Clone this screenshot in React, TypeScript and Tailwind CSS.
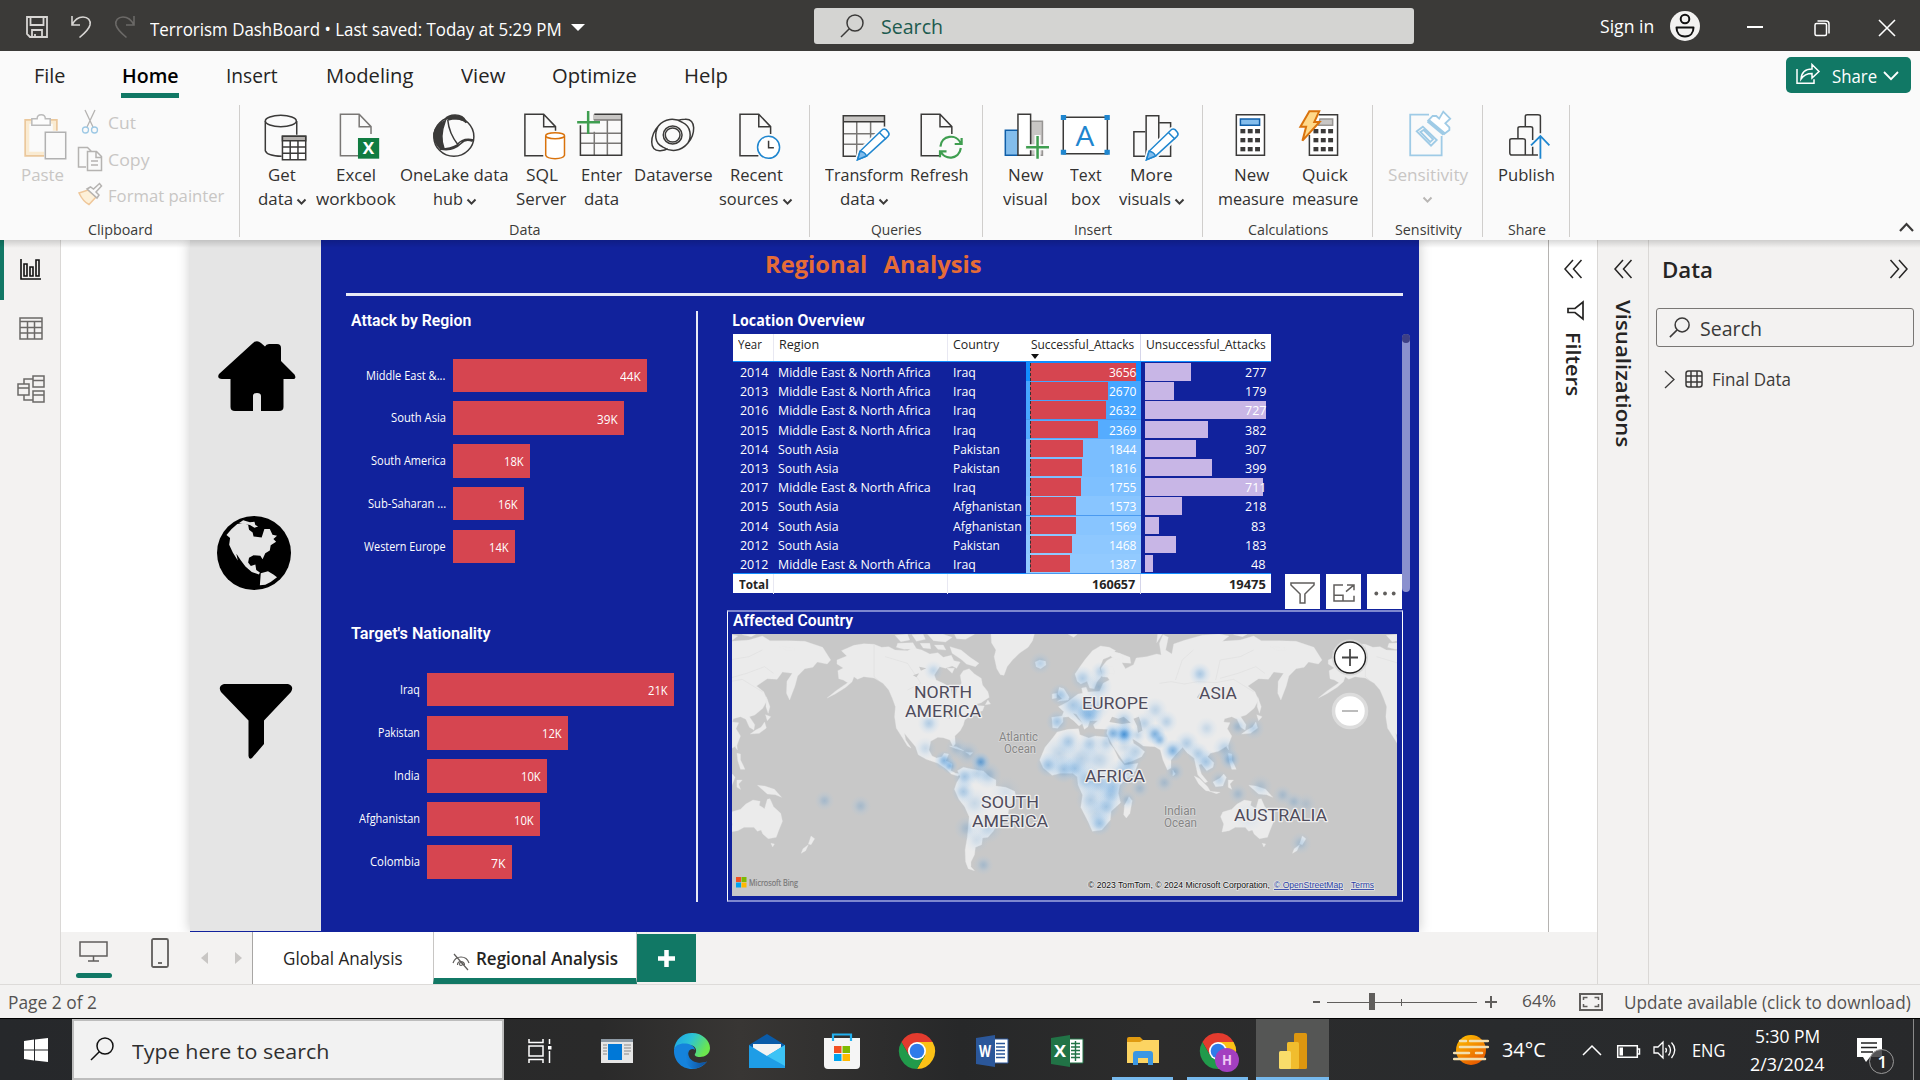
import React, { useLayoutEffect, useRef, useState } from "react";

/* Text set to a known width: the glyph run is scaled along its own axis. */
function T({ w, className = "", vertical = false, children }: { w: number; className?: string; vertical?: boolean; children: React.ReactNode }) {
  const ref = useRef<HTMLSpanElement>(null);
  const [s, setS] = useState(1);
  useLayoutEffect(() => {
    const el = ref.current;
    if (!el) return;
    const n = vertical ? el.offsetHeight : el.offsetWidth;
    if (n) setS((w + 0.7) / n);
  }, [w, vertical, children]);
  return (
    <span className={"block shrink-0 " + className} style={vertical ? { height: w } : { width: w }}>
      <span
        ref={ref}
        className={vertical ? "inline-block origin-top whitespace-pre [writing-mode:vertical-rl]" : "inline-block origin-left whitespace-pre"}
        style={{ transform: vertical ? `scaleY(${s})` : `scaleX(${s})` }}
      >
        {children}
      </span>
    </span>
  );
}

/* Line drawing; strokes keep their width whatever the viewBox ratio is. */
function Art({ box, w, h, className = "", sw = 1.5, stroke = "#3b3a39", children }: { box: string; w: number; h: number; className?: string; sw?: number; stroke?: string; children: React.ReactNode }) {
  return (
    <svg width={w} height={h} viewBox={box} preserveAspectRatio="none" fill="none" stroke={stroke} strokeWidth={sw} className={"block shrink-0 overflow-visible [&_*]:[vector-effect:non-scaling-stroke] " + className}>
      {children}
    </svg>
  );
}

function Magnifier({ w = 24, h = 24, stroke = "#3b3a39", className = "" }) {
  return (
    <Art box="0 0 24 24" w={w} h={h} stroke={stroke} sw={1.5} className={className}>
      <circle cx="15" cy="9" r="8" />
      <path d="M9.300 14.700L1 23" />
    </Art>
  );
}

function TitleBar() {
  return (
    <header className="flex h-[51px] shrink-0 bg-[#3b3a38] text-[18px] leading-6 text-white">
      <Art box="0 0 22 22" w={22} h={22} stroke="#d8d6d4" sw={1.8} className="mt-4 ml-[26px]">
        <path d="M1 1h20v20H4l-3-3zM4.500 1v8h13V1M6 21v-7h10v7M9 21v-3" />
      </Art>
      <Art box="0 0 20 22" w={20} h={22} stroke="#d8d6d4" sw={1.6} className="mt-4 ml-[23px]">
        <path d="M1 0v9h8M1 9C4 3 8 1 12 1c5 0 8 3.500 7 8-1 4-5 8-10.500 12.500" />
      </Art>
      <Art box="0 0 20 22" w={20} h={22} stroke="#6b6967" sw={1.6} className="mt-4 ml-6">
        <path d="M19 0v9h-8M19 9C16 3 12 1 8 1 3 1 0 4.500 1 9c1 4 5 8 10.500 12.500" />
      </Art>
      <T w={411} className="mt-[17px] ml-[15px]">Terrorism DashBoard • Last saved: Today at 5:29 PM</T>
      <svg width="14" height="7" className="mt-6 ml-[10px]"><path d="M0 0h14L7 7z" fill="#fff" /></svg>
      <div className="mt-2 ml-[229px] flex h-9 w-[600px] shrink-0 rounded-[3px] bg-[#d4d4d2] text-[20px] text-[#1d5b4f]">
        <Magnifier className="mt-[6px] ml-[26px]" />
        <T w={61} className="mt-[7px] ml-[17px]">Search</T>
      </div>
      <T w={54} className="mt-[14px] ml-[186px]">Sign in</T>
      <Art box="0 0 30 30" w={30} h={30} stroke="#111" sw={2} className="mt-[11px] ml-4">
        <circle cx="15" cy="15" r="15" fill="#f3f2f1" stroke="none" />
        <circle cx="15" cy="8" r="4.300" />
        <path d="M6.500 16.500h17c0 5-3 9-8.500 9s-8.500-4-8.500-9z" strokeLinejoin="round" />
      </Art>
      <div className="mt-[26px] ml-[47px] h-[1.5px] w-4 bg-white" />
      <Art box="0 0 16 16" w={16} h={16} stroke="#fff" className="mt-5 ml-[51px]">
        <rect x="1" y="3.500" width="11.500" height="12" rx="1.500" />
        <path d="M3.500 1h8.500q3 0 3 3v9.500" />
      </Art>
      <Art box="0 0 16 16" w={16} h={16} stroke="#fff" sw={1.6} className="mt-5 ml-[49px]">
        <path d="M0 0l16 16M16 0L0 16" />
      </Art>
    </header>
  );
}

function TabStrip() {
  return (
    <nav className="flex h-[54px] shrink-0 text-[20px] leading-6 text-[#252423]">
      <T w={31} className="mt-[13px] ml-[34px]">File</T>
      <div className="mt-[13px] ml-14 w-[58px]">
        <T w={56} className="ml-px font-semibold text-black">Home</T>
        <div className="mt-[5px] h-[5px] w-[58px] bg-[#117865]" />
      </div>
      <T w={51} className="mt-[13px] ml-[47px]">Insert</T>
      <T w={87} className="mt-[13px] ml-[49px]">Modeling</T>
      <T w={44} className="mt-[13px] ml-12">View</T>
      <T w={84} className="mt-[13px] ml-[47px]">Optimize</T>
      <T w={43} className="mt-[13px] ml-12">Help</T>
      <div className="mt-[6px] mr-[9px] ml-auto flex h-9 w-[125px] rounded-[5px] bg-[#117865] text-[18px] text-white">
        <Art box="0 0 24 21" w={24} h={21} stroke="#fff" className="mt-[6px] ml-[10px]">
          <path d="M1 6v14.300h17v-4M5 16c.5-7 4-10 11-10V1.500l7 7-7 6.500v-4.500c-5 0-8 1-11 5.500z" />
        </Art>
        <T w={44} className="mt-[7px] ml-3">Share</T>
        <Art box="0 0 14 9" w={14} h={8} stroke="#fff" sw={1.8} className="mt-[15px] ml-2"><path d="M0 0l7 8 7-8" /></Art>
      </div>
    </nav>
  );
}

function Chev({ color = "#3b3a39", className = "" }) {
  return <Art box="0 0 9 6" w={9} h={5.500} stroke={color} sw={2} className={className}><path d="M.5.500L4.500 5 8.500.500" /></Art>;
}

type Line = [string, number];

/* One large ribbon command: drawing over one or two label lines. */
function Cmd({ x, w, o = 0, a, b, chev = false, muted = false, children }: { x: number; w: number; o?: number; a: Line; b?: Line; chev?: boolean; muted?: boolean; children: React.ReactNode }) {
  return (
    <div className={"flex shrink-0 flex-col items-center text-[17px] leading-6 " + (muted ? "text-[#c8c6c4]" : "text-[#323130]")} style={{ width: w }}>
      <Art box={`${(x - o) * 2.45} 333 ${w * 2.45} 147`} w={w} h={49}>{children}</Art>
      <T w={a[1]} className="mt-[3px]">{a[0]}</T>
      {b && (
        <div className="flex items-center">
          <T w={b[1]}>{b[0]}</T>
          {chev && <Chev className="mt-[5px] ml-[5px]" />}
        </div>
      )}
      {!b && chev && <Chev color="#b8b6b4" className="mt-[10px]" />}
    </div>
  );
}

function Group({ className, label, lw, children }: { className: string; label: string; lw: number; children: React.ReactNode }) {
  return (
    <section className={"flex h-[132px] shrink-0 flex-col items-center border-r border-[#d0cecc] pt-[6px] " + className}>
      <div className="flex h-[108px] w-full shrink-0">{children}</div>
      <T w={lw} className="text-[15px] leading-5 text-[#3b3a39]">{label}</T>
    </section>
  );
}

const Doc = ({ x, short = false }: { x: number; short?: boolean }) => (
  <path d={`M${x + 45} 467H${x}V343H${x + 46}L${x + 75} 380V${short ? 392 : 402}M${x + 46} 343V380H${x + 75}`} />
);
const Pencil = ({ x }: { x: number }) => (
  <g stroke="#1f86cf">
    <path d={`M${x} 479l6-25 52-62q6-8 12-3l5 7q5 7-1 14l-52 58z`} fill="#fff" stroke="#fafafa" strokeWidth="5" />
    <path d={`M${x} 479l6-25 52-62q6-8 12-3l5 7q5 7-1 14l-52 58z`} fill="#fff" />
    <path d={`M${x} 479l6-25q12 2 16 14z`} fill="#83bdec" />
    <path d={`M${x + 54} 398l16 20`} />
  </g>
);
const Keys = ({ x }: { x: number }) => (
  <g fill="#3b3a39" stroke="none">
    {[387, 414, 441].map((y) => [0, 18, 36].map((d) => <rect key={`${y}-${d}`} x={x + d} y={y} width="12" height="13" />))}
  </g>
);

function Small({ icon, label, w, className = "" }: { icon: React.ReactNode; label: string; w: number; className?: string }) {
  return (
    <div className={"flex h-9 items-start text-[17px] leading-6 text-[#c8c6c4] " + className}>
      <div className="w-[30px]">{icon}</div>
      <T w={w} className="mt-px">{label}</T>
    </div>
  );
}

function Ribbon() {
  return (
    <div className="flex h-[135px] shrink-0">
      <Group className="w-[240px]" label="Clipboard" lw={64}>
        <div className="ml-[10px] w-[64px]">
          <Cmd x={10} w={64} a={["Paste", 42]} muted>
            <g opacity=".55">
              <path d="M108 467H62V360H139V392" stroke="#e0a050" strokeWidth="2" />
              <path d="M108 460H68V367H133V392" stroke="#fbe0b0" strokeWidth="3" />
              <path d="M78 376v-20h13q0-12 10-12t10 12h12v20z" fill="#fff" stroke="#888" />
              <rect x="111" y="397" width="50" height="79" fill="#fafafa" stroke="#777" />
            </g>
          </Cmd>
        </div>
        <div className="ml-1">
          <Small className="-mt-px" label="Cut" w={27} icon={<Art box="0 0 16 24" w={16} h={24} stroke="#b5b3b1" sw={1.3} className="ml-1"><path d="M3 0l8 17M13 0L5 17" /><circle cx="3.500" cy="20" r="3" stroke="#9dc8e4" /><circle cx="12.500" cy="20" r="3" stroke="#9dc8e4" /></Art>} />
          <Small label="Copy" w={41} className="mt-px" icon={<Art box="0 0 24 24" w={24} h={24} stroke="#b5b3b1"><path d="M8 20H.5V.5h9l4 4M9.500 4.500h9l5 5v14h-14zM18 4.500v6h5.500M13 14h7M13 18h7" /></Art>} />
          <Small label="Format painter" w={116} icon={<Art box="0 0 24 22" w={24} h={22} stroke="#b5b3b1"><path d="M1 10l9-3 8 7-7 7.500q-6-3-10-11.500z" fill="#fdf0d8" stroke="#efc79a" /><path d="M9 6l10 9 2-3-3-3 5.500-6-2-2.500-6 5.500-3-2z" fill="#fafafa" /></Art>} />
        </div>
      </Group>

      <Group className="w-[570px]" label="Data" lw={31}>
        <div className="w-2" />
        <Cmd x={248} w={67} a={["Get", 27]} b={["data", 34]} chev>
          <ellipse cx="688" cy="363" rx="38" ry="17" />
          <path d="M650 363V452Q654 467 690 469M727 363V404" />
          <rect x="692" y="409" width="57" height="70" fill="#fff" />
          <path d="M692 409h57v13h-57z" fill="#b3b0ad" />
          <path d="M692 441h57M692 460h57M711 422v57M730 422v57" />
        </Cmd>
        <Cmd x={315} w={80} a={["Excel", 39]} b={["workbook", 79]}>
          <g stroke="#797775"><Doc x={834} /></g>
          <rect x="877" y="414" width="52" height="62" fill="#107c41" stroke="none" />
          <text x="889" y="463" fontSize="46" fontWeight="700" textLength="28" lengthAdjust="spacingAndGlyphs" fill="#fff" stroke="none">X</text>
        </Cmd>
        <Cmd x={395} w={118} a={["OneLake data", 108]} b={["hub", 29]} chev>
          <ellipse cx="1112" cy="410" rx="49" ry="59" fill="#fafafa" />
          <path d="M1091 362Q1076 410 1088 446L1080 448Q1062 425 1063 402Q1068 372 1091 362Z" fill="#3b3a39" />
          <path d="M1090 358Q1098 345 1115 345Q1135 345 1141 364Q1115 350 1090 358Z" fill="#3b3a39" />
          <path d="M1097 360Q1100 400 1122 434Q1105 447 1078 447M1097 360Q1130 350 1142 368M1120 434Q1135 412 1160 420M1078 447Q1110 455 1130 430Q1140 415 1158 424" />
        </Cmd>
        <Cmd x={513} w={56} a={["SQL", 31]} b={["Server", 50]}>
          <Doc x={1286} short />
          <g stroke="#d9730d"><path d="M1337 407V466Q1340 476 1360 476T1383 466V407" fill="#fff" /><ellipse cx="1360" cy="407" rx="23" ry="9" fill="#fff" /></g>
        </Cmd>
        <Cmd x={569} w={64} a={["Enter", 40]} b={["data", 34]}>
          <path d="M1453 343H1523V360H1453Z" fill="#c8c6c4" stroke="none" />
          <path d="M1422 400H1523M1422 430H1523M1456 395V466M1488 360V466M1455 360H1523" stroke="#797775" />
          <path d="M1422 376V466H1523V343H1456" />
          <path d="M1441 333V402M1414 367H1470" stroke="#3f9e50" strokeWidth="2.500" />
        </Cmd>
        <Cmd x={633} w={79} o={640} a={["Dataverse", 78]}>
          <ellipse cx="80" cy="405" rx="18" ry="21" />
          <ellipse cx="80" cy="405" rx="23" ry="27" />
          <path d="M50 452C20 455 25 405 45 378C60 355 85 352 105 368M110 358C140 355 135 405 117 430C100 455 75 457 56 441M45 378C35 400 35 430 56 441M50 452Q62 451 68 446M117 430C127 410 125 380 105 368M110 358Q98 358 93 363" />
        </Cmd>
        <Cmd x={712} w={87} o={640} a={["Recent", 52]} b={["sources", 59]} chev>
          <Doc x={245} />
          <ellipse cx="315" cy="442" rx="27" ry="33" stroke="#1f86cf" fill="#fff" />
          <path d="M315 422V443H328" />
        </Cmd>
      </Group>

      <Group className="w-[173px]" label="Queries" lw={50}>
        <div className="w-[11px]" />
        <Cmd x={821} w={86} o={640} a={["Transform", 78]} b={["data", 34]} chev>
          <path d="M498 347H599V364H498Z" fill="#c8c6c4" stroke="none" />
          <path d="M498 401H599M498 433H560M531 365V469M565 365V430" stroke="#797775" />
          <path d="M599 385V347H498V469H530M498 365H599" />
          <Pencil x={533} />
        </Cmd>
        <Cmd x={907} w={63} o={640} a={["Refresh", 58]}>
          <Doc x={689} />
          <g stroke="#3f9e50" strokeWidth="2.200"><path d="M736 440C738 405 775 400 786 430M788 414V432H771M786 444C782 480 745 482 736 452M735 472V454H751" /></g>
        </Cmd>
      </Group>

      <Group className="w-[220px]" label="Insert" lw={37}>
        <div className="w-[13px]" />
        <Cmd x={996} w={58} o={640} a={["New", 35]} b={["visual", 44]}>
          <rect x="957" y="364" width="29" height="102" fill="#c8c6c4" stroke="#979593" />
          <rect x="895" y="391" width="32" height="75" fill="#83bdec" stroke="#0f5ea8" />
          <rect x="926" y="343" width="31" height="123" fill="#fff" />
          <path d="M974 405V478M943 442H1004" stroke="#fafafa" strokeWidth="6" />
          <path d="M974 408V476M946 442H1002" stroke="#3f9e50" strokeWidth="2.500" />
        </Cmd>
        <Cmd x={1054} w={62} o={640} a={["Text", 31]} b={["box", 29]}>
          <rect x="1037" y="352" width="108" height="109" fill="#fff" />
          <g fill="#1f86cf" stroke="none"><path d="M1031 345h13v15h-13zM1138 345h13v15h-13zM1031 449h13v15h-13zM1138 449h13v15h-13z" /></g>
          <text x="1067" y="437" fontSize="84" textLength="46" lengthAdjust="spacingAndGlyphs" fill="#1f86cf" stroke="none">A</text>
        </Cmd>
        <Cmd x={1116} w={70} o={640} a={["More", 42]} b={["visuals", 51]} chev>
          <path d="M1238 469H1210V395H1238M1272 368H1300V469H1270" />
          <path d="M1240 469V347H1271V430" />
          <Pencil x={1241} />
        </Cmd>
      </Group>

      <Group className="w-[170px]" label="Calculations" lw={80}>
        <div className="w-3" />
        <Cmd x={1215} w={72} o={640} a={["New", 35]} b={["measure", 66]}>
          <rect x="1461" y="344" width="69" height="122" fill="#fff" />
          <rect x="1471" y="357" width="47" height="19" fill="#83bdec" stroke="#0f5ea8" />
          <Keys x={1471} />
        </Cmd>
        <Cmd x={1287} w={75} o={1280} a={["Quick", 45]} b={["measure", 66]}>
          <path d="M95 344H141V466H72V405" fill="#fff" />
          <path d="M98 357H129V376H94Z" fill="#c8c6c4" stroke="#979593" />
          <Keys x={82} />
          <path d="M72 334H96L84 366H97L55 422L64 380H50Z" fill="#ffd98a" stroke="#d9730d" strokeWidth="2" />
        </Cmd>
      </Group>

      <Group className="w-[110px]" label="Sensitivity" lw={66}>
        <Cmd x={1373} w={109} o={1280} a={["Sensitivity", 79]} chev muted>
          <g stroke="#9fcbe6" strokeWidth="1.800">
            <path d="M365 344H319V466H396V408" />
            <path d="M335 394L350 380L384 420L370 437ZM344 396L352 390L375 418L368 426Z" />
            <path d="M363 362L374 348H383L390 356L400 335L417 356L405 370L415 382V390L402 402Z" fill="#fff" />
            <path d="M363 362L402 402" strokeWidth="4" />
          </g>
        </Cmd>
      </Group>

      <Group className="w-[87px]" label="Share" lw={37}>
        <Cmd x={1483} w={86} o={1280} a={["Publish", 56]}>
          <path d="M601 380V349Q601 344 606 344H632Q638 344 638 349V400M583 414V385Q583 380 588 380H614Q619 380 619 385V420M563 421Q563 416 568 416H595Q601 416 601 421V465H568Q563 465 563 458ZM601 465H632M619 440V465" />
          <path d="M638 476V408M615 436L638 408L660 436" stroke="#1f86cf" strokeWidth="1.800" />
        </Cmd>
      </Group>
      <Art box="0 0 13 8" w={13} h={8} sw={2.2} className="mt-[118px] ml-[330px]"><path d="M0 8l6.500-7L13 8" /></Art>
    </div>
  );
}

function Rail() {
  return (
    <aside className="flex w-[61px] shrink-0 flex-col border-r border-[#dad8d6] bg-[#f3f2f1]">
      <div className="flex h-[60px] border-l-4 border-[#117865] pt-[19px] pl-4">
        <Art box="0 0 21 21" w={21} h={21} stroke="#111" sw={1.6}><path d="M1 0v20h20M4 17V5h3v12zM10 17V8h3v9zM16 17V1h3v16z" /></Art>
      </div>
      <Art box="0 0 24 23" w={24} h={23} stroke="#6b6967" className="mt-[17px] ml-[19px]"><path d="M1 1h22v21H1zM1 4.500h22M1 10.500h22M1 16h22M8.500 4v18M15.500 4v18" /></Art>
      <Art box="0 0 28 28" w={28} h={28} stroke="#6b6967" className="mt-[35px] ml-[17px]"><path d="M1 9h11v11H1zM1 13h11M16 1h11v11H16zM16 5.500h11M16 16h11v11H16zM16 20h11M7 9V4h9M7 20v5h9" /></Art>
    </aside>
  );
}

type Bar = { label: string; lw: number; value: string; vw: number; len: number };
const regions: Bar[] = [
  { label: "Middle East &...", lw: 79, value: "44K", vw: 20, len: 194 },
  { label: "South Asia", lw: 54, value: "39K", vw: 20, len: 171 },
  { label: "South America", lw: 74, value: "18K", vw: 19, len: 77 },
  { label: "Sub-Saharan ...", lw: 77, value: "16K", vw: 19, len: 71 },
  { label: "Western Europe", lw: 81, value: "14K", vw: 19, len: 62 },
];
const nations: Bar[] = [
  { label: "Iraq", lw: 19, value: "21K", vw: 19, len: 246.5 },
  { label: "Pakistan", lw: 41, value: "12K", vw: 19, len: 140.5 },
  { label: "India", lw: 25, value: "10K", vw: 19, len: 120 },
  { label: "Afghanistan", lw: 60, value: "10K", vw: 19, len: 113 },
  { label: "Colombia", lw: 49, value: "7K", vw: 14, len: 85 },
];

function BarChart({ bars, labelClass, rowClass }: { bars: Bar[]; labelClass: string; rowClass: string }) {
  return (
    <div className="text-[12.500px] leading-5 text-white">
      {bars.map((b) => (
        <div key={b.label} className={"flex items-start " + rowClass}>
          <div className={"flex shrink-0 justify-end pt-[7px] " + labelClass}><T w={b.lw}>{b.label}</T></div>
          <div className="flex h-[33.500px] items-center justify-end bg-[#d64550] pt-[3px] pr-[7px]" style={{ width: b.len }}>
            <T w={b.vw}>{b.value}</T>
          </div>
        </div>
      ))}
    </div>
  );
}

const widths: Record<string, number> = { "Middle East & North Africa": 152, "South Asia": 60, Iraq: 22, Pakistan: 46, Afghanistan: 68 };
const ME = "Middle East & North Africa";
const SA = "South Asia";
const rows: [number, string, string, number, number, string, number, number][] = [
  [2014, ME, "Iraq", 3656, 105.6, "bg-[#118dff]", 277, 45.5],
  [2013, ME, "Iraq", 2670, 77.6, "bg-[#45a5ff]", 179, 29.4],
  [2016, ME, "Iraq", 2632, 75.8, "bg-[#47a6ff]", 727, 120.5],
  [2015, ME, "Iraq", 2369, 68.4, "bg-[#55acff]", 382, 63.4],
  [2014, SA, "Pakistan", 1844, 52.8, "bg-[#7abeff]", 307, 51],
  [2013, SA, "Pakistan", 1816, 51.9, "bg-[#7abeff]", 399, 66.6],
  [2017, ME, "Iraq", 1755, 50.5, "bg-[#7ec0ff]", 711, 117.5],
  [2015, SA, "Afghanistan", 1573, 45.5, "bg-[#88c5ff]", 218, 36.7],
  [2014, SA, "Afghanistan", 1569, 45.5, "bg-[#88c5ff]", 83, 13.8],
  [2012, SA, "Pakistan", 1468, 42.2, "bg-[#8ec8ff]", 183, 30.8],
  [2012, ME, "Iraq", 1387, 40.4, "bg-[#92caff]", 48, 8.3],
];
const cols = "grid grid-cols-[41px_174px_78px_115px_130px]";

function DataTable() {
  return (
    <div className="w-[538px] shrink-0 text-[13px] text-white">
      <div className={cols + " h-7 border-b border-[#118dff] bg-white leading-5 text-[#252423]"}>
        <div className="border-r border-[#e8e8f2] pl-[5px]"><T w={23}>Year</T></div>
        <div className="border-r border-[#e8e8f2] pl-[5px]"><T w={39}>Region</T></div>
        <div className="pl-[5px]"><T w={45}>Country</T></div>
        <div className="border-r border-[#d5d5ea] pl-[5px]">
          <T w={103}>Successful_Attacks</T>
          <svg width="8" height="5" className="block"><path d="M0 0h8L4 5z" fill="#111" /></svg>
        </div>
        <div className="pl-[5px]"><T w={119}>Unsuccessful_Attacks</T></div>
      </div>
      {rows.map(([y, region, country, s, sl, bg, u, ul], i) => (
        <div key={i} className={cols + " h-[19.200px] leading-[20px] font-medium"}>
          <div className="flex justify-end pr-[6px]"><T w={28}>{y}</T></div>
          <div className="pl-1"><T w={widths[region]}>{region}</T></div>
          <div className="pl-[5px]"><T w={widths[country]}>{country}</T></div>
          <div className={"flex border-b border-[#4a9af0] pt-px " + bg}>
            <div className="ml-1 grid h-[18px] w-[106px]">
              <div className="col-start-1 row-start-1 h-[17.500px] border-l border-dashed border-[#333] bg-[#d64550]" style={{ width: sl }} />
              <div className="col-start-1 row-start-1 -mt-px flex justify-end"><T w={27}>{s}</T></div>
            </div>
          </div>
          <div className="grid pl-[4px]">
            <div className="col-start-1 row-start-1 mt-px h-[17.500px] bg-[#c8b6e6]" style={{ width: ul }} />
            <div className="col-start-1 row-start-1 flex justify-end pr-[6px]"><T w={u > 99 ? 20.5 : 14}>{u}</T></div>
          </div>
        </div>
      ))}
      <div className={cols + " h-[19.500px] border-t border-[#118dff] bg-white leading-[20px] font-bold text-[#252423]"}>
        <div className="border-r border-[#e8e8f2] pl-[6px]"><T w={29}>Total</T></div>
        <div className="border-r border-[#e8e8f2]" />
        <div />
        <div className="flex justify-end border-r border-[#d5d5ea] pr-[5px]"><T w={43}>160657</T></div>
        <div className="flex justify-end pr-[6px]"><T w={36}>19475</T></div>
      </div>
    </div>
  );
}

const heat: [number, number, number, number][] = [
  [905, 403, 18, 1], [905, 403, 14, 0.5], [880, 400, 16, 0.75], [974, 402, 17, 0.75], [985, 420, 14, 0.6], [1014, 452, 18, 0.75], [1045, 430, 20, 0.4], [828, 345, 22, 0.6], [815, 335, 24, 0.4],
  [790, 315, 24, 0.45], [840, 320, 24, 0.35], [755, 365, 18, 0.5], [762, 285, 18, 0.5], [812, 235, 20, 0.4], [852, 215, 16, 0.35], [848, 260, 22, 0.4], [905, 360, 18, 0.4],
  [584, 486, 16, 0.9], [502, 482, 16, 0.7], [515, 498, 13, 0.65], [530, 445, 18, 0.3], [555, 460, 20, 0.35], [548, 530, 19, 0.5], [545, 575, 19, 0.45], [600, 525, 22, 0.4], [575, 520, 18, 0.3],
  [468, 370, 18, 0.4], [460, 445, 18, 0.25], [478, 212, 16, 0.3], [570, 610, 24, 0.25], [552, 685, 20, 0.3], [600, 685, 24, 0.3], [575, 720, 20, 0.2], [590, 795, 16, 0.3], [315, 618, 17, 0.3], [234, 602, 16, 0.3],
  [735, 495, 20, 0.55], [770, 508, 22, 0.55], [795, 505, 20, 0.5], [780, 425, 20, 0.45], [828, 432, 20, 0.4], [865, 430, 18, 0.35], [760, 460, 28, 0.3], [810, 475, 28, 0.35], [850, 480, 26, 0.3], [915, 490, 20, 0.5],
  [820, 540, 26, 0.5], [850, 550, 26, 0.45], [880, 560, 24, 0.45], [830, 600, 24, 0.4], [865, 620, 22, 0.5], [850, 670, 20, 0.55], [875, 585, 22, 0.4], [840, 640, 24, 0.25], [912, 600, 15, 0.35], [940, 565, 16, 0.3], [995, 548, 16, 0.3], [1018, 515, 16, 0.4],
  [900, 520, 24, 0.4], [930, 455, 20, 0.35], [905, 440, 18, 0.2], [950, 370, 18, 0.35], [975, 330, 20, 0.3], [1000, 365, 18, 0.35], [935, 405, 14, 0.3], [1075, 222, 18, 0.45], [1090, 385, 18, 0.25], [1088, 485, 20, 0.5], [1070, 460, 18, 0.4], [1142, 478, 17, 0.6], [1130, 445, 20, 0.35],
  [1160, 380, 16, 0.35], [1195, 385, 18, 0.35], [1118, 540, 16, 0.3], [1210, 560, 20, 0.25], [1160, 582, 16, 0.3], [1260, 585, 16, 0.3], [1285, 605, 16, 0.3], [1312, 612, 18, 0.2], [1185, 650, 24, 0.15], [1300, 730, 18, 0.3], [717, 190, 18, 0.35], [640, 575, 26, 0.15],
];

function World() {
  return (
    <g id="world" stroke="#e9e9e9" strokeWidth="0.8" strokeLinejoin="round" fill="#ebebeb">
      <path d="M262 180L284 168 272 152 300 136 322 131 345 133 362 142 378 140 392 150 420 152 432 143 452 150 470 162 488 158 500 172 518 166 524 182 538 186 530 205 520 198 505 205 492 200 480 225 484 240 500 250 516 262 520 286 528 288 531 268 541 250 538 226 545 212 558 206 570 222 585 235 588 255 600 275 603 292 585 308 565 316 592 318 588 332 570 340 560 348 548 360 545 375 538 392 526 408 527 432 522 440 515 420 500 413 488 412 472 424 468 450 475 468 485 474 497 470 502 460 512 462 506 482 520 492 517 512 528 520 540 522 532 528 518 522 506 506 488 490 462 478 444 464 438 440 424 418 413 400 416 420 428 444 420 438 408 412 395 385 391 350 393 320 386 295 378 270 365 250 345 234 322 230 308 238 300 230 296 245 282 262 258 282 240 294 260 272 286 248 276 240 266 236 264 212 276 204 262 192Z" />
      <path d="M392 106L420 103 425 120 405 125ZM430 104L455 103 460 118 440 124ZM398 130L432 128 440 146 412 148 395 142ZM465 103L500 103 520 112 505 126 478 122ZM515 140L540 150 560 172 580 190 572 200 552 192 540 178 520 160ZM448 130L470 130 472 146 455 144ZM480 135L500 135 506 150 488 148ZM525 103L570 103 550 118 530 116ZM508 205L525 205 520 220ZM600 300L606 312 594 314Z" />
      <path d="M607 102L704 102 700 122 690 142 672 158 655 180 643 200 636 226 628 224 620 206 614 170 618 150 608 128Z" />
      <path d="M706 186L716 180 729 184 730 195 718 206 708 200Z" />
      <path d="M532 512L545 502 560 506 590 513 604 530 618 540 618 558 640 562 660 574 663 592 648 618 644 650 622 668 612 694 600 712 588 714 586 734 572 742 570 764 562 786 562 800 570 812 556 806 550 785 549 750 554 710 558 650 548 620 535 598 525 568 530 548 538 530Z" />
      <path d="M514 438L530 440 546 452 528 446ZM550 456L566 458 560 466Z" />
      <path d="M755 396L780 388 803 386 806 404 826 414 840 408 868 412 872 430 882 446 892 474 906 496 936 490 930 512 910 538 895 556 892 580 897 608 876 634 874 660 855 690 834 694 824 664 808 622 812 585 802 555 800 530 790 520 762 520 744 526 724 504 716 480 728 442 745 414Z" />
      <path d="M916 590L923 602 918 640 910 654 904 644 906 616Z" />
      <path d="M745 383L743 352 766 348 770 335 758 320 778 306 792 292 802 282 812 280 810 264 820 262 824 276 850 274 858 250 872 240 868 232 856 230 853 205 866 182 884 168 895 160 918 172 920 190 900 188 908 206 926 194 932 174 955 170 978 162 988 165 984 130 992 104 1004 112 998 150 1012 162 1016 132 1042 120 1080 106 1118 102 1140 108 1125 124 1165 120 1195 108 1212 122 1250 122 1290 124 1330 142 1348 180 1340 192 1318 186 1308 202 1290 206 1274 228 1268 258 1256 300 1249 280 1250 244 1262 220 1240 216 1228 238 1206 236 1182 258 1198 275 1206 300 1196 325 1178 345 1166 350 1178 374 1176 390 1166 382 1158 358 1146 350 1130 356 1128 366 1142 368 1136 386 1146 408 1138 436 1116 454 1098 460 1092 470 1106 488 1104 502 1090 512 1078 492 1072 494 1078 522 1092 545 1086 548 1070 525 1062 475 1046 458 1036 442 1020 464 1010 480 1010 504 1002 510 992 480 986 450 974 440 948 438 938 428 924 416 926 430 938 440 951 455 944 470 922 484 906 490 896 470 880 438 870 412 866 400 868 388 840 386 836 374 846 362 828 362 824 380 816 388 810 366 798 342 790 340 802 358 812 370 804 378 792 362 780 350 768 352 768 366 756 385Z" />
      <path d="M800 244L795 222 806 200 818 178 834 152 852 138 872 142 886 152 872 170 858 178 850 204 856 226 844 246 838 266 828 264 822 244 808 252Z" />
      <path d="M870 150L895 160 905 176 885 178 872 166ZM862 196L880 200 884 222 862 218 856 208Z" />
      <path d="M756 304L766 296 756 282 760 262 770 266 782 292 780 300ZM744 296L744 282 754 280 754 294Z" />
      <path d="M1062 528L1074 536 1092 560 1098 574 1088 572 1072 552ZM1096 574L1120 577 1112 581ZM1104 546L1120 534 1128 522 1134 532 1126 558 1110 560ZM1138 540L1150 540 1142 552 1146 568 1138 562ZM1184 556L1200 558 1222 568 1238 592 1224 584 1206 582 1196 570ZM1138 460L1146 462 1146 480 1152 496 1156 508 1146 508 1140 482ZM1134 440L1138 434 1139 450Z" />
      <path d="M1202 344L1214 350 1206 362ZM1200 366L1204 384 1188 400 1168 402 1180 390 1192 382ZM1204 290L1212 320 1208 340 1203 320ZM1014 510L1020 522 1014 528Z" />
      <path d="M1124 696L1128 672 1121 650 1126 636 1146 628 1158 612 1174 600 1190 604 1188 616 1200 626 1206 598 1212 596 1220 620 1236 640 1240 664 1232 690 1226 712 1208 716 1196 702 1192 690 1184 694 1176 682 1154 682 1140 692ZM1214 730L1222 732 1218 741Z" />
      <path d="M1304 708L1312 716 1304 734 1298 732ZM1298 734L1292 752 1282 760 1286 746Z" />
      <path d="M1232 140L1262 142 1270 150 1250 152ZM1150 104L1180 103 1170 110ZM980 103L990 103 978 128ZM780 103L800 103 792 112Z" />
      <g stroke="none" fill="#c8c8c8">
        <path d="M872 366L878 350 892 356 904 350 920 368 900 372ZM926 356L938 350 942 366 946 392 936 398 934 378ZM500 326L520 330 526 340 512 336ZM512 340L518 340 514 358ZM526 342L540 346 532 352ZM1068 292L1074 280 1077 284 1072 296ZM446 200L462 205 450 212ZM432 226L446 220 440 232Z" />
      </g>
      <g fill="none" stroke="#cfcfcf" strokeWidth="0.7">
        <path d="M345 134L345 230 372 262M984 250L1010 245 1040 252 1070 245 1110 248 1150 238 1196 276M1020 240L1035 180 1060 150M1110 240L1120 180 1165 170 1195 150M1220 220L1200 200 1160 220 1120 235M370 170L420 190 450 250 420 270" />
      </g>
    </g>
  );
}

const places: [string, number, number, number][] = [
  ["NORTH", 914, 697.5, 58], ["AMERICA", 905, 717, 76], ["EUROPE", 1082, 708.5, 66], ["ASIA", 1199, 699, 38], ["AFRICA", 1085, 781.5, 60],
  ["SOUTH", 981, 807.5, 58], ["AMERICA", 972, 827, 76], ["AUSTRALIA", 1234, 820.5, 93],
];
const seas: [string, number, number, number][] = [["Atlantic", 999, 740.5, 39], ["Ocean", 1004, 753, 32], ["Indian", 1164, 815, 32], ["Ocean", 1164, 827, 33]];

function MapVisual() {
  return (
    <div className="relative h-[262px] w-[665px] overflow-hidden bg-[#c8c8c8]">
      <svg width="665" height="262" viewBox="27 102 1489 786" preserveAspectRatio="none" className="block">
        <defs>
          <radialGradient id="heat">
            <stop offset="0" stopColor="#2b82d0" stopOpacity=".75" />
            <stop offset=".3" stopColor="#4595dd" stopOpacity=".6" />
            <stop offset=".6" stopColor="#72b3ee" stopOpacity=".32" />
            <stop offset="1" stopColor="#8cc4f5" stopOpacity="0" />
          </radialGradient>
        </defs>
        <World />
        <use href="#world" x="-1100" />
        <use href="#world" x="1100" />
        {heat.map(([x, y, r, k], i) => <ellipse key={i} cx={x} cy={y} rx={r * 1.4} ry={r * 1.9} fill="url(#heat)" opacity={k} />)}
      </svg>
      <svg width="665" height="262" viewBox="732 634 665 262" className="absolute inset-0 font-[Roboto,sans-serif]">
        <g fontSize="17" fill="#4f4c5c" stroke="#efefef" strokeWidth="2.500" strokeLinejoin="round" paintOrder="stroke">
          {places.map(([t, x, y, w], i) => <text key={i} x={x} y={y} textLength={w} lengthAdjust="spacingAndGlyphs">{t}</text>)}
        </g>
        <g fontSize="12" fill="#868686" stroke="#d8d8d8" strokeWidth="1.500" paintOrder="stroke">
          {seas.map(([t, x, y, w], i) => <text key={i} x={x} y={y} textLength={w} lengthAdjust="spacingAndGlyphs">{t}</text>)}
        </g>
        <path d="M736 877h5v5h-5z" fill="#f25022" /><path d="M741.500 877h5v5h-5z" fill="#7fba00" /><path d="M736 882.500h5v5h-5z" fill="#00a4ef" /><path d="M741.500 882.500h5v5h-5z" fill="#ffb900" />
        <g className="font-['Open_Sans',sans-serif]" fontSize="9">
          <text x="749" y="886" textLength="49" lengthAdjust="spacingAndGlyphs" fill="#777" stroke="#777" strokeWidth=".2">Microsoft Bing</text>
        </g>
        <g className="font-['Liberation_Sans',sans-serif]" fontSize="8.800" stroke="#e4e4e4" strokeWidth="1.500" paintOrder="stroke">
          <text x="1088" y="888" textLength="182" lengthAdjust="spacingAndGlyphs" fill="#111">© 2023 TomTom, © 2024 Microsoft Corporation,</text>
          <text x="1274" y="888" textLength="69" lengthAdjust="spacingAndGlyphs" fill="#2b3fa5" textDecoration="underline">© OpenStreetMap</text>
          <text x="1351" y="888" textLength="23" lengthAdjust="spacingAndGlyphs" fill="#2b3fa5" textDecoration="underline">Terms</text>
        </g>
        <circle cx="1350" cy="657.500" r="16" fill="#fff" stroke="#d8d8d8" strokeWidth="4" />
        <circle cx="1350" cy="657.500" r="15.500" fill="#fff" stroke="#222" strokeWidth="1.400" />
        <path d="M1342 657.500h16M1350 649v17" stroke="#444" strokeWidth="1.800" />
        <circle cx="1350" cy="711" r="16.500" fill="#fff" stroke="#dcdcdc" strokeWidth="3.500" />
        <path d="M1342 711h16" stroke="#b5b5b5" strokeWidth="1.800" />
      </svg>
    </div>
  );
}

function ReportNav() {
  return (
    <div className="flex w-[131px] shrink-0 flex-col bg-[#e5e5e5]">
      <svg width="78" height="70" viewBox="0 0 78 70" className="mt-[101px] ml-[28px] shrink-0">
        <path d="M35 2Q39-1.500 43 2L47 5.500Q48 3 51 3H59Q63 3 63 7V20L76.500 33.500Q79 38 74.500 38H65.500V66Q65.500 70 61 70H43V55Q43 52 39 52T35 55V70H17Q12.500 70 12.500 66V38H4Q-1.500 37.500 1 33Z" fill="#000" />
      </svg>
      <svg width="74" height="74" viewBox="487 829 164 221" preserveAspectRatio="none" className="mt-[105px] ml-[27px] shrink-0">
        <ellipse cx="569" cy="939.500" rx="82" ry="110.500" fill="#000" />
        <g fill="#e5e5e5">
          <path d="M508 886Q520 865 532 853L545 850L556 855L558 870L566 878L568 890L586 893L592 868L604 868L610 885L620 888L612 898L618 906L606 916L604 932L594 940L588 958L583 948L568 946L558 954L556 968L562 978L572 974L574 990L582 998L580 1004L564 996L550 980L540 962L530 942L533 962L522 938L514 915L516 895Z" />
          <path d="M536 850L545 842L560 848L570 846L572 856L578 860L570 864L560 856ZM584 1000L600 994L612 1004L620 1012L606 1026L594 1034L582 1036Z" />
        </g>
      </svg>
      <svg width="74" height="75" viewBox="0 0 74 75" className="mt-[94px] ml-[29px] shrink-0">
        <path d="M5 0H69Q75.500 2 72 8L45 36.500V60L33 74Q30 76 29.500 72V36.500L2 8Q-1.500 2 5 0Z" fill="#000" />
      </svg>
    </div>
  );
}

function Report() {
  return (
    <div className="mr-[129px] ml-[129px] flex w-[1229px] shrink-0 border-b border-[#11229c] shadow-[0_0_12px_rgba(0,0,0,0.22)]">
      <ReportNav />
      <div className="flex w-[1098px] flex-col bg-[#11229c]">
        <div className="flex h-[53px] shrink-0 pt-[8px] pl-[444px] text-[24px] leading-8 font-bold [word-spacing:2px] text-[#e66c37]">
          <T w={216}>Regional  Analysis</T>
        </div>
        <div className="ml-[25px] h-[2.500px] w-[1057px] shrink-0 bg-[#e8eaf6]" />
        <div className="flex">
          <div className="w-[375px] shrink-0 pt-[13px]">
            <T w={120} className="ml-[30px] font-[Roboto,sans-serif] text-[16px] leading-6 font-semibold text-white">Attack by Region</T>
            <div className="mt-[26px]"><BarChart bars={regions} labelClass="w-[132px] pr-[8px]" rowClass="h-[42.800px]" /></div>
            <T w={139} className="mt-[50px] ml-[30px] font-[Roboto,sans-serif] text-[16px] leading-6 font-semibold text-white">Target's Nationality</T>
            <div className="mt-[26.500px]"><BarChart bars={nations} labelClass="w-[106px] pr-[8px]" rowClass="h-[43.100px]" /></div>
          </div>
          <div className="mt-[15px] h-[591px] w-[2px] shrink-0 bg-[#e8eaf6]" />
          <div className="pt-[12px]">
            <T w={132} className="ml-[34px] text-[16px] leading-6 font-bold text-white">Location Overview</T>
            <div className="relative mt-[2.500px] flex">
              <div className="ml-[35px]"><DataTable /></div>
              <div className="ml-[131px] h-[258px] w-[8px] rounded-full bg-[#8a90ce]"><div className="h-[9px] w-[8px] rounded-full bg-[#3d3f85]" /></div>
              <div className="absolute top-[240px] left-[587px] flex gap-[6px]">
                <div className="grid h-[34.500px] w-[35px] place-items-center bg-white"><Art box="0 0 26 22" w={25} h={22} stroke="#605e5c" className="mt-1"><path d="M1 1h24v2l-9.500 9v9h-5v-9L1 3z" /></Art></div>
                <div className="grid h-[34.500px] w-[35px] place-items-center bg-white"><Art box="0 0 22 20" w={22} h={18} stroke="#605e5c" className="mt-1"><path d="M10 1H1v18h20v-6M1 12.500h9V19M13 8.500L21 1M14 1h7v6" /></Art></div>
                <div className="grid h-[34.500px] w-[35px] place-items-center bg-white"><svg width="22" height="5" fill="#605e5c" className="mt-1"><circle cx="2.300" cy="2.500" r="1.900" /><circle cx="11" cy="2.500" r="1.900" /><circle cx="19.700" cy="2.500" r="1.900" /></svg></div>
              </div>
            </div>
            <div className="mt-[17px] ml-[29px] h-[292px] w-[676px] border-x border-y-2 border-x-white border-y-[#7d87cf] pl-1">
              <T w={119} className="mb-[4px] ml-px font-[Roboto,sans-serif] text-[16px] leading-[18px] font-semibold text-white">Affected Country</T>
              <MapVisual />
            </div>
          </div>
        </div>
      </div>
    </div>
  );
}

const Double = ({ flip = false }: { flip?: boolean }) => (
  <Art box="0 0 18 18" w={18} h={18} stroke="#252423" className={flip ? "rotate-180" : ""}><path d="M9 0L1 9l8 9M17.500 0l-8 9 8 9" /></Art>
);

function PageTabs() {
  return (
    <div className="flex h-[52px] shrink-0 bg-[#f3f2f1] text-[17.500px] leading-6 text-[#252423]">
      <div className="ml-[15px] w-9 pt-[9px]">
        <Art box="0 0 29 21" w={29} h={21} stroke="#605e5c" className="ml-[3px]"><path d="M1 1h27v14H1zM14.500 15v5M9 20h11" /></Art>
        <div className="mt-[11px] h-[5px] rounded-full bg-[#117865]" />
      </div>
      <Art box="0 0 18 30" w={18} h={30} stroke="#605e5c" sw={1.8} className="mt-[6px] ml-[39px]"><rect x="1" y="1" width="16" height="28" rx="1.500" /><path d="M7 25h4" /></Art>
      <svg width="7" height="12" className="mt-5 ml-8"><path d="M7 0v12L0 6z" fill="#c8c6c4" /></svg>
      <svg width="7" height="12" className="mt-5 ml-[27px]"><path d="M0 0v12l7-6z" fill="#c8c6c4" /></svg>
      <div className="ml-[10px] flex w-[181px] border-l border-[#a8a6a4] bg-white pt-[14px] pl-[30px]"><T w={119}>Global Analysis</T></div>
      <div className="flex w-[204px] border-x border-b-[6px] border-x-[#c8c6c4] border-b-[#117865] bg-white pl-[18px]">
        <Art box="0 0 18 16" w={18} h={16} stroke="#605e5c" sw={1.2} className="mt-[22px]"><path d="M1 9Q3 3 9 3t8 6M2 0l14 16" /><path d="M5.500 11a3.500 3.500 0 0 1 7 0" /><circle cx="9" cy="10" r="1.500" /></Art>
        <T w={141} className="mt-[14px] ml-[6px] font-semibold">Regional Analysis</T>
      </div>
      <div className="mt-[2px] grid h-12 w-[59px] place-items-center bg-[#117865]"><svg width="17" height="17"><path d="M8.500 0v17M0 8.500h17" stroke="#fff" strokeWidth="4.500" /></svg></div>
    </div>
  );
}

function Body() {
  return (
    <div className="flex h-[744px] shrink-0">
      <Rail />
      <div className="flex w-[1536px] shrink-0 flex-col">
        <div className="flex h-[692px] overflow-hidden bg-white">
          <Report />
          <div className="flex flex-1 flex-col items-center border-l border-[#b5b3b1] bg-white pt-5">
            <Double />
            <Art box="0 0 17 19" w={17} h={19} stroke="#252423" sw={1.7} className="mt-[23px] ml-1"><path d="M16 1v17L8 11.500H1v-4h7z" /></Art>
            <T vertical w={64} className="mt-3 w-7 text-[20px] leading-7 font-semibold text-[#252423]">Filters</T>
          </div>
        </div>
        <PageTabs />
      </div>
      <div className="flex w-[52px] shrink-0 flex-col items-center border-x border-[#dad8d6] bg-[#f3f2f1] pt-5">
        <Double />
        <T vertical w={147} className="mt-[22px] w-7 text-[20px] leading-7 font-semibold text-[#252423]">Visualizations</T>
      </div>
      <div className="w-[271px] shrink-0 bg-[#f3f2f1]">
        <div className="flex h-[68px] justify-between pt-[15px] pr-3 pl-[13px] text-[22px] leading-7 font-semibold text-[#252423]">
          <T w={50}>Data</T>
          <div className="pt-[5px]"><Double flip /></div>
        </div>
        <div className="ml-[7px] flex h-[39px] w-[258px] rounded-[3px] border border-[#797775] text-[20px] leading-6 text-[#3b3a39]">
          <Magnifier w={21} h={21} className="mt-2 ml-3" />
          <T w={61} className="mt-2 ml-[10px]">Search</T>
        </div>
        <div className="mt-5 ml-4 flex items-center text-[17.500px] leading-6 text-[#3b3a39]">
          <Art box="0 0 9 18" w={9} h={17} sw={1.3}><path d="M0 0l9 9-9 9" /></Art>
          <Art box="0 0 18 18" w={18} h={18} className="ml-[11px]"><rect x="1" y="1" width="16" height="16" rx="2.500" /><path d="M6 1v16M12 1v16M1 6h16M1 12h16" /></Art>
          <T w={78} className="ml-[9px]">Final Data</T>
        </div>
      </div>
    </div>
  );
}

function StatusBar() {
  return (
    <div className="flex h-[34px] shrink-0 border-t border-[#dddbd9] bg-[#f3f2f1] text-[18px] leading-6 text-[#555351]">
      <T w={88} className="mt-[5px] ml-2">Page 2 of 2</T>
      <div className="mt-4 ml-[1217px] h-[2px] w-[7px] bg-[#605e5c]" />
      <Art box="0 0 150 18" w={150} h={18} stroke="#605e5c" sw={1} className="mt-2 ml-[7px]"><path d="M0 9.500h150M74.500 6v7" /><rect x="42" y="0" width="6" height="17" fill="#605e5c" stroke="none" /></Art>
      <svg width="12" height="12" className="mt-[11px] ml-2"><path d="M6 0v12M0 6h12" stroke="#605e5c" strokeWidth="2" /></svg>
      <T w={34} className="mt-1 ml-[25px] text-[17px]">64%</T>
      <Art box="0 0 24 18" w={24} h={18} stroke="#605e5c" sw={2} className="mt-2 ml-[23px]"><path d="M1 1h22v16H1z" /><path d="M4.500 7V4.500h4M15.500 4.500h4V7M19.500 11v2.500h-4M8.500 13.500h-4V11" strokeWidth="1.500" /></Art>
      <T w={286} className="mt-[5px] ml-[21px]">Update available (click to download)</T>
    </div>
  );
}

function Chrome() {
  return (
    <>
      <path d="M2.400 9A18 18 0 0 1 33.600 9H18L10.200 22.500Z" fill="#e33b2e" />
      <path d="M33.600 9A18 18 0 0 1 18 36L25.800 22.500 18 9Z" fill="#fbc116" />
      <path d="M18 36A18 18 0 0 1 2.400 9L10.200 22.500 25.800 22.500Z" fill="#219a4b" />
      <circle cx="18" cy="18" r="9" fill="#fff" /><circle cx="18" cy="18" r="7.300" fill="#2f7bea" />
    </>
  );
}

function OfficeMark({ letter, dark, mid }: { letter: string; dark: string; mid: string }) {
  return (
    <>
      <path d="M17 4h15v24H17z" fill="#fff" stroke={mid} />
      <path d="M20 8.500h9M20 12h9M20 15.500h9M20 19h9M20 22.500h9" stroke={mid} strokeWidth="1.600" />
      {letter === "X" && <path d="M24.500 6v20" stroke={mid} strokeWidth="1.400" />}
      <path d="M0 3L19 0v32L0 29z" fill={dark} />
      <text x="3" y="22" fontSize="16" fontWeight="700" textLength="12" lengthAdjust="spacingAndGlyphs" fill="#fff">{letter}</text>
    </>
  );
}

function TaskIcon({ className = "", running = false, active = false, w = 36, h = 36, children }: { className?: string; running?: boolean; active?: boolean; w?: number; h?: number; children: React.ReactNode }) {
  return (
    <div className={"flex h-[61px] shrink-0 flex-col items-center justify-between " + (active ? "bg-[#555655] " : "") + className}>
      <div className="grid h-[58px] place-items-center pt-[5px]"><svg width={w} height={h} viewBox={`0 0 ${w} ${h}`} className="overflow-visible">{children}</svg></div>
      {running && <div className="h-[3px] w-full bg-[#76b9ed]" />}
    </div>
  );
}

function Taskbar() {
  return (
    <footer className="flex h-[62px] shrink-0 border-t border-black bg-[linear-gradient(90deg,#26282b_0px,#2a2a2a_600px,#383634_740px,#272829_960px,#2c2c2c_1150px,#292b2d_1500px,#28292b_1920px)]">
      <svg width="24" height="24" viewBox="0 0 24 24" fill="#fff" className="mt-[19px] ml-6 shrink-0"><path d="M0 3l10-1.500v10H0zM11 1.400L24 0v11.500H11zM0 12.500h10v10L0 21zM11 12.500h13V24l-13-1.500z" /></svg>
      <div className="ml-6 flex w-[432px] shrink-0 border-2 border-[#bdbdbd] bg-[#f2f2f2] text-[20.500px] leading-6 text-[#2f2f2f]">
        <Magnifier stroke="#111" className="mt-4 ml-4" />
        <T w={197} className="mt-[18px] ml-[18px]">Type here to search</T>
      </div>
      <TaskIcon className="ml-6 w-6" w={24} h={24}><path d="M1 0v3.500h14V0M1 7h14v10H1zM1 24v-3.500h14V24M21.500 0v5M21.500 12v12" fill="none" stroke="#fff" strokeWidth="1.500" /><path d="M20 7h3.500v3.500H20z" fill="#fff" /></TaskIcon>
      <TaskIcon className="ml-[49px] w-8" w={32} h={24}><path d="M0 0h32v24H0z" fill="#e6e6e6" /><path d="M0 0h32v3H0z" fill="#8e9aa5" /><path d="M7 5h14v16H7z" fill="#0078d7" /><path d="M2 6h4M2 9h4M2 12h4M2 15h4M23 6h7M23 9h7M23 12h7M23 15h5" stroke="#888" /></TaskIcon>
      <TaskIcon className="ml-[41px] w-9">
        <defs><linearGradient id="eg" x1="0" x2="1" y1="0" y2=".4"><stop offset="0" stopColor="#1ba0e8" /><stop offset=".5" stopColor="#2cc3d5" /><stop offset="1" stopColor="#6be64e" /></linearGradient><linearGradient id="eb" x1="0" x2="1"><stop offset="0" stopColor="#1585e0" /><stop offset="1" stopColor="#0f4a94" /></linearGradient></defs>
        <path d="M0 17C1 6 9 0 18 0c11 0 18 8 18 15 0 6-5 9-10 9-4 0-6-1.500-5-3 3-4 0-9-6-9C8 12 2 13 0 17z" fill="url(#eg)" />
        <path d="M0 17C1 12 6 10 12 10.500 17 11 21 14 21 17c-2-2-6-1-7 3-1 6 4 10 11 10 4 0 7-1 8-1.500C30 33 24 36 18 36 7 36-.500 27 0 17z" fill="#1583dc" />
        <path d="M15 17c-3 2-4 5-4 8 0 5 4 10 9 10.800C26 35 31 31 33 28.500c-3 1.500-8 2-12 .5-6-2-8-8-6-12z" fill="url(#eb)" />
      </TaskIcon>
      <TaskIcon className="ml-[39px] w-9" h={34}><path d="M0 11L18 0l18 11v8H0z" fill="#0a5ba8" /><path d="M4 10h28v12H4z" fill="#f3f3f3" /><path d="M0 11l18 11 18-11v23H0z" fill="#1e9de6" /><path d="M36 11v21L18 22z" fill="#3cc3f5" /></TaskIcon>
      <TaskIcon className="ml-[39px] w-9"><path d="M9 8V1.500h18V8" fill="none" stroke="#22b1f0" strokeWidth="2.200" /><path d="M0 5h36v27q0 4-4 4H4q-4 0-4-4z" fill="#f5f5f5" /><path d="M9 5v3M27 5v3" stroke="#22b1f0" strokeWidth="2.200" /><path d="M10 13h7.500v7H10z" fill="#f25022" /><path d="M18.500 13H26v7h-7.500z" fill="#7fba00" /><path d="M10 21h7.500v7H10z" fill="#00a4ef" /><path d="M18.500 21H26v7h-7.500z" fill="#ffb900" /></TaskIcon>
      <TaskIcon className="ml-[39px] w-9"><Chrome /></TaskIcon>
      <TaskIcon className="ml-[41px] w-8" w={32} h={32}><OfficeMark letter="W" dark="#2b579a" mid="#2b579a" /></TaskIcon>
      <TaskIcon className="ml-[43px] w-8" w={32} h={32}><OfficeMark letter="X" dark="#217346" mid="#217346" /></TaskIcon>
      <TaskIcon running className="ml-[29px] w-[61px]" w={32} h={28}><path d="M0 2q0-2 2-2h11l3 3-3 3H0z" fill="#e09a10" /><path d="M0 5h13l3-2h16v23H0z" fill="#fcd462" /><path d="M6 28V17q0-3 3-3h14q3 0 3 3v11h-5v-7H11v7z" fill="#3b97e3" /></TaskIcon>
      <TaskIcon running className="ml-[14px] w-[61px]"><Chrome /><circle cx="27" cy="27" r="12" fill="#a33fc0" /><text x="22" y="32" fontSize="14" fontWeight="700" textLength="10" lengthAdjust="spacingAndGlyphs" fill="#eec8f5">H</text></TaskIcon>
      <TaskIcon running active className="ml-2 w-[73px]" w={28}><rect x="15" width="13" height="36" rx="1.500" fill="#dd960f" /><rect x="8" y="9" width="12" height="27" rx="1.500" fill="#f1bd2e" /><rect x="0" y="18" width="12" height="18" rx="1.500" fill="#f9dc6a" /></TaskIcon>
      <svg width="36" height="31" viewBox="0 0 36 31" className="mt-4 ml-[124px] shrink-0">
        <defs><linearGradient id="sun" x1="0" y1="0" x2=".6" y2="1"><stop offset="0" stopColor="#ffc400" /><stop offset="1" stopColor="#e85d00" /></linearGradient></defs>
        <circle cx="18" cy="15" r="15" fill="url(#sun)" />
        <path d="M7 6h6M17 6h18M7 12h28M1 18h15M23 18h6M1 24h31" stroke="#f3dfae" strokeWidth="2.500" strokeLinecap="round" />
      </svg>
      <T w={43} className="mt-[19px] ml-[13px] text-[20px] leading-6 text-white">34°C</T>
      <Art box="0 0 18 10" w={18} h={10} stroke="#fff" className="mt-[26px] ml-[38px]"><path d="M0 10l9-9 9 9" /></Art>
      <Art box="0 0 23 13" w={23} h={13} stroke="#fff" className="mt-[26px] ml-4"><path d="M.7.700h19.600v11.600H.7zM20.500 4h2v5h-2" /><path d="M2.500 2.500h3.500v8H2.500z" fill="#fff" stroke="none" /></Art>
      <Art box="0 0 23 18" w={23} h={18} stroke="#fff" sw={1.3} className="mt-[22px] ml-[13px]"><path d="M1 6h4l5-5v16l-5-5H1zM12.500 7q2 2 0 4.500M15.500 4q4 5 0 10.500M18.500 1.500q6.500 7 0 15.500" /></Art>
      <T w={33} className="mt-[19px] ml-4 text-[17.500px] leading-6 text-white">ENG</T>
      <div className="ml-[25px] w-[74px] shrink-0 text-[17.500px] leading-7 text-white">
        <T w={64} className="mt-[3px] ml-[5px]">5:30 PM</T>
        <T w={74}>2/3/2024</T>
      </div>
      <svg width="38" height="38" viewBox="0 0 38 38" className="mt-[19px] ml-[33px] shrink-0">
        <path d="M0 0h25v19H13l-4 5-3-5H0z" fill="#fff" /><path d="M4 5h16M4 9.500h16M4 14h12" stroke="#222" strokeWidth="1.500" />
        <circle cx="24.500" cy="23.500" r="12" fill="#2a2b2dcc" stroke="#999" /><text x="20.500" y="30" fontSize="17" fontWeight="600" fill="#fff">1</text>
      </svg>
      <div className="ml-auto mr-[6px] w-px bg-[#8a8a8a]" />
    </footer>
  );
}

export default function App() {
  return (
    <div className="flex h-[1080px] w-[1920px] flex-col overflow-hidden bg-[#fafafa] font-['Open_Sans','Noto_Sans',sans-serif]">
      <TitleBar />
      <TabStrip />
      <Ribbon />
      <div className="relative">
        <Body />
        <div className="pointer-events-none absolute inset-x-0 top-0 h-2 bg-linear-to-b from-black/15 to-transparent" />
      </div>
      <StatusBar />
      <Taskbar />
    </div>
  );
}
